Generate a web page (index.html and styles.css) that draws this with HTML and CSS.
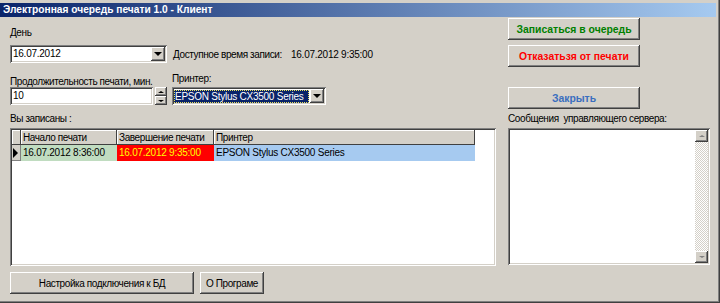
FILE: index.html
```html
<!DOCTYPE html>
<html lang="ru">
<head>
<meta charset="utf-8">
<title>Электронная очередь печати 1.0 - Клиент</title>
<link rel="stylesheet" href="styles.css">
</head>
<body>
<div class="window">
  <div class="titlebar">Электронная очередь печати 1.0 - Клиент</div>
  <div class="body">
    <div class="left">
      <div class="lbl day">День</div>
      <div class="row r-date">
        <div class="field combo date"><span class="val lat">16.07.2012</span><span class="dd"><i class="tri-down"></i></span></div>
        <span class="avail">Доступное время записи:</span>
        <span class="avail-val lat">16.07.2012 9:35:00</span>
      </div>
      <div class="row r-labels">
        <span class="lbl dur">Продолжительность печати, мин.</span>
        <span class="lbl prn">Принтер:</span>
      </div>
      <div class="row r-inputs">
        <div class="field spin"><span class="val lat">10</span></div>
        <div class="spinbtns">
          <span class="sb"><i class="tri-up small"></i></span>
          <span class="sb"><i class="tri-down small"></i></span>
        </div>
        <div class="field combo printer"><span class="sel"><span class="seltext lat">EPSON Stylus CX3500 Series</span></span><span class="dd"><i class="tri-down"></i></span></div>
      </div>
      <div class="lbl reg">Вы записаны :</div>
      <div class="grid">
        <div class="gtable">
          <div class="hc sel-h"></div>
          <div class="hc">Начало печати</div>
          <div class="hc">Завершение печати</div>
          <div class="hc">Принтер</div>
          <div class="dc rowsel"><i class="tri-right"></i></div>
          <div class="dc c-start lat">16.07.2012 8:36:00</div>
          <div class="dc c-end lat">16.07.2012 9:35:00</div>
          <div class="dc c-prn lat">EPSON Stylus CX3500 Series</div>
        </div>
      </div>
      <div class="row bottom">
        <button class="btn b-db">Настройка подключения к БД</button>
        <button class="btn b-about">О Програме</button>
      </div>
    </div>
    <div class="right">
      <button class="btn act b-enq">Записаться в очередь</button>
      <button class="btn act b-cancel">Отказатьзя от печати</button>
      <button class="btn act b-close">Закрыть</button>
      <div class="lbl msg-lbl">Сообщения&nbsp; управляющего сервера:</div>
      <div class="msgs">
        <div class="vscroll">
          <span class="sbtn"><i class="tri-up small grey"></i></span>
          <span class="track"></span>
          <span class="sbtn"><i class="tri-down small grey"></i></span>
        </div>
      </div>
    </div>
  </div>
</div>
</body>
</html>
```
FILE: styles.css
```css
* { box-sizing: border-box; }
body {
  margin: 0;
  background: #d4d0c8;
  font: 10px "Liberation Sans", Arial, sans-serif;
  letter-spacing: -0.4px;
  color: #000;
}
.lat { font-size: 10px; letter-spacing: -0.25px; }
.window {
  width: 720px;
  height: 303px;
  background: #d4d0c8;
  padding-top: 3px;
  box-shadow: inset -1px -1px #404040, inset -2px -2px #808080;
  display: flex;
  flex-direction: column;
  overflow: hidden;
}
.titlebar {
  height: 14px;
  margin-right: 4px;
  padding-left: 3px;
  line-height: 14px;
  color: #fff;
  font-weight: bold;
  font-size: 10.2px;
  letter-spacing: 0;
  background: linear-gradient(to right, #0a246a, #a6caf0);
  white-space: nowrap;
}
.body {
  display: flex;
  padding-left: 10px;
  gap: 12px;
}
.left {
  width: 486px;
  display: flex;
  flex-direction: column;
}
.right {
  width: 202px;
  display: flex;
  flex-direction: column;
}
.lbl { line-height: 13px; white-space: nowrap; }
.row { display: flex; }

.day { margin-top: 9px; }
.r-date { margin-top: 6px; height: 18px; align-items: center; }

.field {
  background: #fff;
  box-shadow: inset 1px 1px #808080, inset -1px -1px #fff, inset 2px 2px #404040, inset -2px -2px #d4d0c8;
  padding: 2px;
  display: flex;
  align-items: center;
}
.field .val { padding-left: 1px; line-height: 14px; flex: 1; }
.combo .dd {
  width: 14px;
  height: 14px;
  background: #d4d0c8;
  box-shadow: inset -1px -1px #404040, inset 1px 1px #fff, inset -2px -2px #808080;
  display: flex;
  align-items: center;
  justify-content: center;
}
.date { width: 157px; height: 18px; }
.avail { margin-left: 6px; width: 118px; white-space: nowrap; }

.tri-down, .tri-up, .tri-right { display: block; width: 0; height: 0; }
.tri-down { border-left: 4px solid transparent; border-right: 4px solid transparent; border-top: 4px solid #000; }
.tri-down.small { border-left-width: 3px; border-right-width: 3px; border-top-width: 2px; }
.tri-up.small { border-left: 3px solid transparent; border-right: 3px solid transparent; border-bottom: 2px solid #000; }
.grey.tri-down { border-top-color: #808080; }
.grey.tri-up { border-bottom-color: #808080; }
.tri-right { border-top: 5px solid transparent; border-bottom: 5px solid transparent; border-left: 5px solid #000; }

.r-labels { margin-top: 9px; height: 15px; align-items: flex-start; }
.dur { width: 162px; margin-top: 3px; }

.r-inputs { height: 18px; }
.spin { width: 143px; height: 18px; }
.spinbtns { margin-left: 2px; width: 12px; display: flex; flex-direction: column; }
.sb {
  height: 9px;
  background: #d4d0c8;
  box-shadow: inset -1px -1px #404040, inset 1px 1px #fff, inset -2px -2px #808080;
  display: flex;
  align-items: center;
  justify-content: center;
}
.printer { margin-left: 5px; width: 154px; height: 18px; }
.printer .sel {
  flex: 1;
  height: 13px;
  margin-right: 1px;
  background: #0a246a;
  outline: 1px dotted #e8e060;
  outline-offset: -1px;
  color: #fff;
  line-height: 13px;
  white-space: nowrap;
  overflow: hidden;
}
.seltext { padding-left: 1px; }

.reg { margin-top: 7px; }
.grid {
  margin-top: 3px;
  height: 138px;
  background: #fff;
  padding: 2px;
  box-shadow: inset 1px 1px #808080, inset -1px -1px #fff, inset 2px 2px #404040, inset -2px -2px #d4d0c8;
}
.gtable {
  display: grid;
  grid-template-columns: 9px 96px 97px 261px;
  grid-template-rows: 15px 16px;
}
.hc {
  background: #d4d0c8;
  box-shadow: inset -1px -1px #404040, inset 1px 1px #fff;
  padding-left: 2px;
  line-height: 15px;
  white-space: nowrap;
  overflow: hidden;
}
.dc {
  padding-left: 2px;
  line-height: 16px;
  white-space: nowrap;
  overflow: hidden;
}
.rowsel {
  padding-left: 1px;
  background: #d4d0c8;
  box-shadow: inset -1px -1px #808080;
  display: flex;
  align-items: center;
}
.c-start { background: #c0dcc0; }
.c-end { background: #ff0000; color: #ffff00; }
.c-prn { background: #a6caf0; }

.bottom { margin-top: 6px; gap: 6px; }
.btn {
  font: inherit;
  letter-spacing: inherit;
  height: 22px;
  padding: 0;
  border: 0;
  background: #d4d0c8;
  color: #000;
  box-shadow: inset -1px -1px #404040, inset 1px 1px #fff, inset -2px -2px #808080, inset 2px 2px #d4d0c8;
  white-space: nowrap;
}
.b-db { width: 184px; }
.b-about { width: 64px; }
.act { width: 132px; font-weight: bold; font-size: 10.4px; letter-spacing: 0; }
.b-enq { margin-top: 1px; color: #008000; }
.b-cancel { margin-top: 5px; color: #ff0000; }
.b-close { margin-top: 20px; color: #3a6ebf; }
.msg-lbl { margin-top: 3px; }
.msgs {
  margin-top: 3px;
  height: 137px;
  background: #fff;
  padding: 2px;
  box-shadow: inset 1px 1px #808080, inset -1px -1px #fff, inset 2px 2px #404040, inset -2px -2px #d4d0c8;
  display: flex;
  justify-content: flex-end;
}
.vscroll { width: 13px; display: flex; flex-direction: column; }
.sbtn {
  height: 12px;
  background: #d4d0c8;
  box-shadow: inset -1px -1px #404040, inset 1px 1px #fff, inset -2px -2px #808080;
  display: flex;
  align-items: center;
  justify-content: center;
}
.track {
  flex: 1;
  background: repeating-conic-gradient(#d4d0c8 0 25%, #fff 0 50%) 0 0 / 2px 2px;
}
```
